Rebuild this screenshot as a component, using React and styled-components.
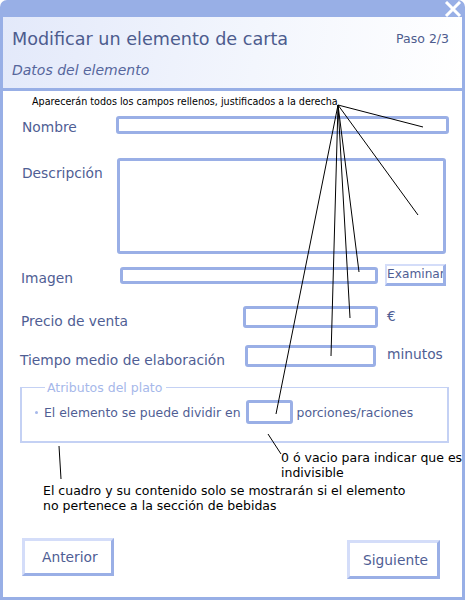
import React from 'react';
import styled, { createGlobalStyle } from 'styled-components';

const GlobalStyle = createGlobalStyle`
    body {
        margin: 0;
        background: #ffffff;
        font-family: "DejaVu Sans", "Liberation Sans", sans-serif;
    }
`;

const Frame = styled.div`
    position: relative;
    width: 465px;
    height: 600px;
    box-sizing: border-box;
    padding: 0 3px 3px 3px;

    display: flex;
    flex-direction: column;

    background-color: #98afe6;
    border-radius: 7px 7px 0 0;
`;

const TitleBar = styled.div`
    height: 17px;
    display: flex;
    justify-content: flex-end;
    align-items: center;
`;

const Header = styled.div`
    height: 71px;
    padding: 0 13px 0 9px;
    box-sizing: border-box;

    display: flex;
    flex-direction: column;

    background: linear-gradient(100deg, #e3e9fa 0%, #f3f6fd 55%, #ffffff 100%);
`;

const HeaderTop = styled.div`
    height: 40px;
    display: flex;
    justify-content: space-between;
    align-items: center;
    padding-top: 3px;
    box-sizing: border-box;
`;

const Title = styled.div`
    font-size: 17.6px;
    color: #4d5c8e;
`;

const Step = styled.div`
    font-size: 12.5px;
    color: #4d5c8e;
`;

const Subtitle = styled.div`
    font-size: 14px;
    font-style: italic;
    color: #56669c;
    margin-top: 5px;
`;

const Body = styled.div`
    flex: 1;
    margin-top: 3px;
    background-color: #ffffff;
    display: flex;
    flex-direction: column;
`;

const Note = styled.div`
    font-size: ${p => p.size || 12.5}px;
    line-height: ${p => p.lh || 15}px;
    color: #000000;
    margin-top: ${p => p.top || 0}px;
    padding-left: ${p => p.left || 0}px;
    white-space: nowrap;
`;

const Row = styled.div`
    display: flex;
    align-items: ${p => p.align || 'center'};
    height: ${p => p.h}px;
    margin-top: ${p => p.top || 0}px;
`;

const Label = styled.div`
    width: ${p => p.w}px;
    padding-left: ${p => p.left}px;
    margin-top: ${p => p.shift || 0}px;
    font-size: 13.8px;
    color: #4f5e94;
    white-space: nowrap;
`;

const Field = styled.div`
    width: ${p => p.w}px;
    height: ${p => p.h}px;
    margin-left: ${p => p.left || 0}px;
    box-sizing: border-box;
    border: 3px solid #9aafe6;
    border-radius: 3px;
    background: #ffffff;
`;

const Unit = styled.div`
    margin-left: ${p => p.left}px;
    margin-top: ${p => p.shift || 0}px;
    font-size: 13.8px;
    color: #4f5e94;
`;

const BrowseButton = styled.div`
    width: 61px;
    height: 22px;
    margin-left: 7px;
    box-sizing: border-box;
    overflow: hidden;
    white-space: nowrap;

    border-top: 2px solid #d4ddf9;
    border-left: 2px solid #d4ddf9;
    border-right: 3px solid #9aafe6;
    border-bottom: 3px solid #9aafe6;

    font-size: 12.2px;
    line-height: 16px;
    color: #4f5e94;
`;

const Group = styled.fieldset`
    margin: 14px 13px 0 17px;
    padding: 6px 0 0 13px;
    height: 62px;
    box-sizing: border-box;
    border: 2px solid #c4d1f4;
    border-top-width: 1px;
`;

const Legend = styled.legend`
    margin-left: 10px;
    padding: 0 4px 0 2px;
    font-size: 12.5px;
    line-height: 13px;
    color: #a6b8ea;
`;

const Item = styled.div`
    display: flex;
    align-items: center;
    height: 24px;
    font-size: 12.4px;
    color: #4f5e94;
    white-space: nowrap;
`;

const Bullet = styled.span`
    width: 3px;
    height: 3px;
    margin-right: 6px;
    border-radius: 50%;
    background: #a6b8ea;
`;

const SmallField = styled(Field)`
    margin: 0 4px 0 5px;
`;

const Footer = styled.div`
    display: flex;
    justify-content: space-between;
    align-items: flex-start;
    margin-top: 25px;
    padding: 0 22px 0 19px;
`;

const Button = styled.div`
    width: ${p => p.w}px;
    height: ${p => p.h}px;
    margin-top: ${p => p.top || 0}px;
    box-sizing: border-box;
    padding-left: ${p => p.pad}px;

    display: flex;
    align-items: center;

    border-top: 3px solid #d4ddf9;
    border-left: 3px solid #d4ddf9;
    border-right: 3px solid #9aafe6;
    border-bottom: 3px solid #9aafe6;

    font-size: 13.8px;
    color: #4f5e94;
`;

const Callouts = styled.svg`
    position: absolute;
    left: 0;
    top: 0;
    pointer-events: none;
`;

const targets = [
    [423, 127],
    [418, 215],
    [359, 272],
    [350, 318],
    [331, 356],
    [276, 414]
];

export default function App() {
    return (
        <>
            <GlobalStyle />
            <Frame>
                <TitleBar>
                    <svg width="18" height="16" viewBox="0 0 18 16">
                        <path d="M2 1 L16 15 M16 1 L2 15" stroke="#ffffff" strokeWidth="3" />
                    </svg>
                </TitleBar>
                <Header>
                    <HeaderTop>
                        <Title>Modificar un elemento de carta</Title>
                        <Step>Paso 2/3</Step>
                    </HeaderTop>
                    <Subtitle>Datos del elemento</Subtitle>
                </Header>
                <Body>
                    <Note size={9.6} lh={12} left={29} top={5}>
                        Aparecerán todos los campos rellenos, justificados a la derecha
                    </Note>

                    <Row h={18} top={8}>
                        <Label w={94} left={19} shift={3}>Nombre</Label>
                        <Field w={333} h={18} />
                    </Row>

                    <Row h={96} top={24} align="flex-start">
                        <Label w={95} left={19} shift={7}>Descripción</Label>
                        <Field w={329} h={96} />
                    </Row>

                    <Row h={22} top={10}>
                        <Label w={99} left={18} shift={5}>Imagen</Label>
                        <Field w={258} h={17} />
                        <BrowseButton>Examinar</BrowseButton>
                    </Row>

                    <Row h={22} top={20}>
                        <Label w={222} left={18} shift={8}>Precio de venta</Label>
                        <Field w={135} h={22} />
                        <Unit left={9} shift={-2}>€</Unit>
                    </Row>

                    <Row h={22} top={17}>
                        <Label w={225} left={17} shift={8}>Tiempo medio de elaboración</Label>
                        <Field w={131} h={22} />
                        <Unit left={11} shift={-4}>minutos</Unit>
                    </Row>

                    <Group>
                        <Legend>Atributos del plato</Legend>
                        <Item>
                            <Bullet />
                            El elemento se puede dividir en
                            <SmallField w={47} h={24} />
                            porciones/raciones
                        </Item>
                    </Group>

                    <Note left={278} top={7}>
                        0 ó vacio para indicar que es
                        <br />
                        indivisible
                    </Note>
                    <Note left={40} top={3}>
                        El cuadro y su contenido solo se mostrarán si el elemento
                        <br />
                        no pertenece a la sección de bebidas
                    </Note>

                    <Footer>
                        <Button w={92} h={38} pad={17} top={0}>Anterior</Button>
                        <Button w={93} h={39} pad={13} top={2}>Siguiente</Button>
                    </Footer>
                </Body>

                <Callouts width="465" height="600">
                    {targets.map(([x, y]) => (
                        <line key={`${x}-${y}`} x1="338" y1="105" x2={x} y2={y} stroke="#000" strokeWidth="1" />
                    ))}
                    <line x1="268" y1="434" x2="281" y2="454" stroke="#000" strokeWidth="1" />
                    <line x1="59" y1="446" x2="61" y2="479" stroke="#000" strokeWidth="1" />
                </Callouts>
            </Frame>
        </>
    );
}
